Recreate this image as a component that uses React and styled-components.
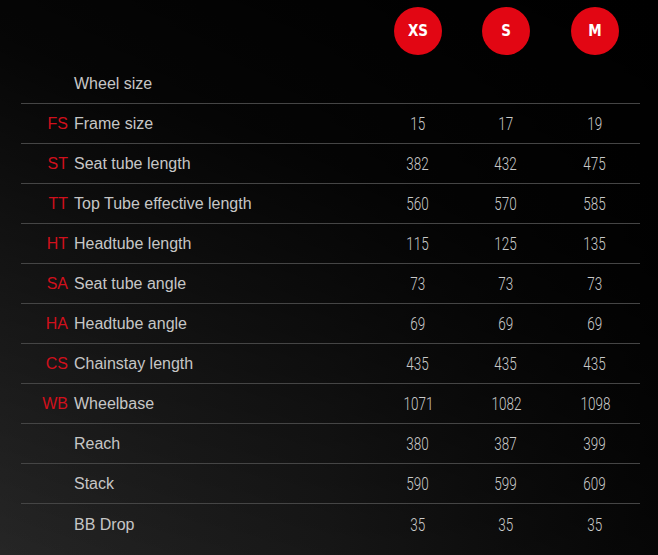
import React from "react";
import styled, { createGlobalStyle } from "styled-components";

const GlobalStyle = createGlobalStyle`
  html, body {
    margin: 0;
    padding: 0;
    background: #000;
  }
`;

const Page = styled.div`
  width: 658px;
  min-height: 555px;
  box-sizing: border-box;
  padding: 0 18px 0 21px;
  background:
    linear-gradient(200deg, rgba(0,0,0,1) 0%, rgba(0,0,0,0.85) 35%, rgba(0,0,0,0) 100%),
    linear-gradient(90deg, #262626 0%, #1c1c1c 50%, #0a0a0a 100%);
`;

const Grid = styled.div`
  display: grid;
  grid-template-columns: 353px 88px 88px 90px;
`;

const HeaderRow = styled.div`
  display: contents;
`;

const HeaderCell = styled.div`
  height: 64px;
  display: flex;
  justify-content: center;
  padding-top: 7px;
  box-sizing: border-box;
`;

const SizeBadge = styled.div`
  width: 48px;
  height: 48px;
  border-radius: 50%;
  background: #e20613;
  color: #fff;
  display: flex;
  align-items: center;
  justify-content: center;
  font-family: "DejaVu Sans Condensed", "DejaVu Sans", sans-serif;
  font-stretch: condensed;
  font-weight: bold;
  font-size: 15px;
`;

const Row = styled.div`
  display: contents;
  & > div {
    height: 40px;
    box-sizing: border-box;
    border-bottom: ${(p) => (p.$last ? "none" : "1px solid #454545")};
  }
`;

const LabelCell = styled.div`
  display: flex;
  align-items: center;
  font-family: "Liberation Sans", Arial, sans-serif;
  font-size: 16px;
  padding-top: 1px;
`;

const Abbr = styled.span`
  width: 47px;
  text-align: right;
  color: #d0101c;
  margin-right: 6px;
`;

const Label = styled.span`
  color: #c6c6c6;
`;

const ValueCell = styled.div`
  display: flex;
  align-items: center;
  justify-content: center;
  padding-top: 1px;
`;

const Value = styled.span`
  display: inline-block;
  font-family: Roboto, sans-serif;
  font-weight: 300;
  font-size: 17.5px;
  color: #cacaca;
  transform: scaleX(0.77);
`;

const sizes = ["XS", "S", "M"];

const rows = [
  { abbr: "", label: "Wheel size", values: ["", "", ""] },
  { abbr: "FS", label: "Frame size", values: ["15", "17", "19"] },
  { abbr: "ST", label: "Seat tube length", values: ["382", "432", "475"] },
  { abbr: "TT", label: "Top Tube effective length", values: ["560", "570", "585"] },
  { abbr: "HT", label: "Headtube length", values: ["115", "125", "135"] },
  { abbr: "SA", label: "Seat tube angle", values: ["73", "73", "73"] },
  { abbr: "HA", label: "Headtube angle", values: ["69", "69", "69"] },
  { abbr: "CS", label: "Chainstay length", values: ["435", "435", "435"] },
  { abbr: "WB", label: "Wheelbase", values: ["1071", "1082", "1098"] },
  { abbr: "", label: "Reach", values: ["380", "387", "399"] },
  { abbr: "", label: "Stack", values: ["590", "599", "609"] },
  { abbr: "", label: "BB Drop", values: ["35", "35", "35"] },
];

const App = () => {
  return (
    <>
      <GlobalStyle />
      <Page>
        <Grid>
          <HeaderRow>
            <HeaderCell />
            {sizes.map((s) => (
              <HeaderCell key={s}>
                <SizeBadge>{s}</SizeBadge>
              </HeaderCell>
            ))}
          </HeaderRow>
          {rows.map((r, i) => (
            <Row key={r.label} $last={i === rows.length - 1}>
              <LabelCell>
                <Abbr>{r.abbr}</Abbr>
                <Label>{r.label}</Label>
              </LabelCell>
              {r.values.map((v, j) => (
                <ValueCell key={j}>
                  <Value>{v}</Value>
                </ValueCell>
              ))}
            </Row>
          ))}
        </Grid>
      </Page>
    </>
  );
};

export default App;
